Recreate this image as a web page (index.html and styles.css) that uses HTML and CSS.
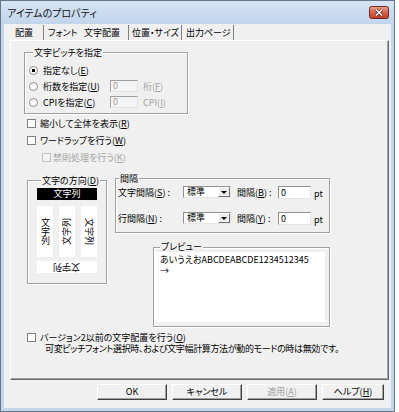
FILE: index.html
```html
<!DOCTYPE html>
<html lang="ja">
<head>
  <meta charset="UTF-8" />
  <title>アイテムのプロパティ</title>
  <link rel="stylesheet" href="styles.css">
</head>
<body>
  <div class="window">
    <div class="titlebar">
      <span class="title">アイテムのプロパティ</span>
      <span class="close">
        <svg width="20" height="13" viewBox="0 0 20 13">
          <defs>
            <linearGradient id="red" x1="0" y1="0" x2="0" y2="1">
              <stop offset="0" stop-color="#eaa596"/>
              <stop offset="0.5" stop-color="#d4624c"/>
              <stop offset="1" stop-color="#c03a28"/>
            </linearGradient>
          </defs>
          <rect x="0.5" y="0.5" width="19" height="12" rx="2" fill="url(#red)" stroke="#70291e"/>
          <path d="M7 3.5l6 6M13 3.5l-6 6" stroke="#5a2018" stroke-width="3"/>
          <path d="M7 3.5l6 6M13 3.5l-6 6" stroke="#fff" stroke-width="1.6"/>
        </svg>
      </span>
    </div>

    <div class="client">
      <div class="tabs">
        <span class="tab t1">配置</span>
        <span class="tab t2">フォント</span>
        <span class="tab t3 active">文字配置</span>
        <span class="tab t4">位置・サイズ</span>
        <span class="tab t5">出力ページ</span>
      </div>

      <div class="panel">
        <fieldset class="group pitch">
          <legend>文字ピッチを指定</legend>
          <div class="opt first"><span class="radio on"></span><span>指定なし(<u>E</u>)</span></div>
          <div class="opt">
            <span class="radio"></span><span class="opt-label">桁数を指定(<u>U</u>)</span>
            <span class="field dis">0</span><span class="muted">桁(<u>F</u>)</span>
          </div>
          <div class="opt">
            <span class="radio"></span><span class="opt-label">CPIを指定(<u>C</u>)</span>
            <span class="field dis">0</span><span class="muted">CPI(<u>I</u>)</span>
          </div>
        </fieldset>

        <div class="check first"><span class="box"></span>縮小して全体を表示(<u>R</u>)</div>
        <div class="check"><span class="box"></span>ワードラップを行う(<u>W</u>)</div>
        <div class="check sub muted"><span class="box off"></span>禁則処理を行う(<u>K</u>)</div>

        <div class="middle">
          <fieldset class="group direction">
            <legend>文字の方向(<u>D</u>)</legend>
            <div class="dir-h selected">文字列</div>
            <div class="dir-v">
              <div class="vbox"><span class="upright">文字列</span></div>
              <div class="vbox"><span class="sideways flip">文字列</span></div>
              <div class="vbox"><span class="sideways">文字列</span></div>
            </div>
            <div class="dir-h bottom"><span class="flip">文字列</span></div>
          </fieldset>

          <div class="right-col">
            <fieldset class="group spacing">
              <legend>間隔</legend>
              <div class="srow first">
                <span class="slabel">文字間隔(<u>S</u>) :</span>
                <span class="select"><span class="val">標準</span><span class="drop"><i></i></span></span>
                <span class="slabel2">間隔(<u>B</u>) :</span>
                <span class="input">0</span><span class="pt">pt</span>
              </div>
              <div class="srow">
                <span class="slabel">行間隔(<u>N</u>) :</span>
                <span class="select"><span class="val">標準</span><span class="drop"><i></i></span></span>
                <span class="slabel2">間隔(<u>Y</u>) :</span>
                <span class="input">0</span><span class="pt">pt</span>
              </div>
            </fieldset>

            <fieldset class="group preview">
              <legend>プレビュー</legend>
              <div class="preview-area">
                <div>あいうえおABCDEABCDE1234512345</div>
                <div>→</div>
              </div>
            </fieldset>
          </div>
        </div>

        <div class="check version"><span class="box"></span>バージョン2以前の文字配置を行う(<u>O</u>)</div>
        <div class="note">可変ピッチフォント選択時、および文字幅計算方法が動的モードの時は無効です。</div>
      </div>

      <div class="buttons">
        <span class="btn">OK</span>
        <span class="btn">キャンセル</span>
        <span class="btn muted">適用(<u>A</u>)</span>
        <span class="btn help">ヘルプ(<u>H</u>)</span>
      </div>
    </div>
  </div>
</body>
</html>
```

FILE: styles.css
```css
body {
  margin: 0;
  background: #fff;
  font-family: "Noto Sans CJK JP", sans-serif;
  font-size: 9px;
  line-height: 11px;
  color: #000;
  font-feature-settings: "palt";
}

.window {
  box-sizing: border-box;
  width: 395px;
  height: 412px;
  border: 1px solid #65768b;
  background: #c4d6ec;
  display: flex;
  flex-direction: column;
}

.titlebar {
  height: 23px;
  flex: none;
  display: flex;
  align-items: center;
  justify-content: space-between;
  padding: 0 5px 0 6px;
  background: linear-gradient(#d6e4f5, #c2d5ec);
}

.title {
  font-size: 10px;
  color: #111;
}

.close svg {
  display: block;
}

.client {
  flex: 1;
  margin: 0 3px 3px 3px;
  padding: 1px 1px 0 6px;
  background: #f0f0f0;
}

/* tabs */
.tabs {
  display: flex;
  height: 15px;
  line-height: 15px;
}

.tab {
  box-sizing: border-box;
  white-space: nowrap;
  border-right: 1px solid #808080;
}

.t1 { width: 34px; padding-left: 5px; }
.t2 { width: 38px; padding-left: 4px; border-right: none; }
.t3 { width: 47px; padding-left: 2px; }
.t4 { width: 53px; padding-left: 3px; }
.t5 { width: 52px; padding-left: 4px; }

.panel {
  box-sizing: border-box;
  width: 379px;
  height: 340px;
  border: 1px solid;
  border-color: #fff #696969 #696969 #fff;
  box-shadow: inset -1px -1px 0 #a0a0a0;
}

/* group boxes */
.group {
  box-sizing: border-box;
  margin: 0;
  padding: 0;
  min-width: 0;
  border: 1px solid #a0a0a0;
  box-shadow: 1px 1px 0 #fff, inset 1px 1px 0 #fff;
}

.group legend {
  padding: 0 1px;
  margin-left: 4px;
  line-height: 11px;
  white-space: nowrap;
  background: #f0f0f0;
}

.pitch {
  margin: 6px 0 0 13px;
  width: 164px;
  padding: 0 0 3px 4px;
}

.opt {
  display: flex;
  align-items: center;
  height: 16px;
  white-space: nowrap;
}

.opt.first {
  margin-top: 4px;
}

.radio {
  flex: none;
  box-sizing: border-box;
  width: 9px;
  height: 9px;
  border-radius: 50%;
  border: 1px solid #8a8a8a;
  background: #fff;
  margin-right: 5px;
}

.radio.on {
  background: radial-gradient(circle, #000 0 1.5px, #fff 2px);
}

.opt-label {
  width: 67px;
}

.field {
  box-sizing: border-box;
  width: 28px;
  height: 12px;
  line-height: 10px;
  padding-left: 2px;
  border: 1px solid;
  border-color: #a0a0a0 #e3e3e3 #e3e3e3 #a0a0a0;
  background: #f4f4f4;
  margin-right: 5px;
}

.muted,
.dis {
  color: #a3a3a3;
}

/* checkboxes */
.check {
  display: flex;
  align-items: center;
  height: 17px;
  margin-left: 16px;
  white-space: nowrap;
}

.check.first {
  margin-top: 1px;
}

.check.sub {
  margin-left: 31px;
}

.box {
  flex: none;
  box-sizing: border-box;
  width: 9px;
  height: 9px;
  border: 1px solid #808080;
  background: #fff;
  margin-right: 4px;
}

.box.off {
  border-color: #c0c0c0;
  background: #f4f4f4;
  margin-right: 2px;
}

/* middle row */
.middle {
  display: flex;
  align-items: flex-start;
  margin-top: 7px;
}

.direction {
  flex: none;
  margin: 2px 0 0 16px;
  width: 80px;
  padding: 0 8px 10px 9px;
}

.direction legend {
  margin-right: -20px;
}

.dir-h {
  width: 60px;
  height: 12px;
  line-height: 12px;
  text-align: center;
  white-space: nowrap;
  background: #fff;
}

.dir-h.selected {
  margin-top: 2px;
  background: #000;
  color: #fff;
}

.dir-h.bottom {
  margin-top: 4px;
}

.dir-v {
  display: flex;
  gap: 6px;
  margin-top: 6px;
}

.vbox {
  width: 16px;
  height: 51px;
  background: #fff;
  display: flex;
  align-items: center;
  justify-content: center;
}

.upright,
.sideways {
  flex: none;
  writing-mode: vertical-rl;
  white-space: nowrap;
  line-height: 10px;
}

.upright {
  text-orientation: upright;
}

.sideways {
  text-orientation: sideways;
}

.flip {
  display: inline-block;
  transform: rotate(180deg);
}

.right-col {
  margin-left: 8px;
}

.spacing {
  width: 215px;
  padding: 0 0 7px 2px;
}

.spacing legend {
  margin-left: 1px;
}

.srow {
  display: flex;
  align-items: center;
  height: 14px;
  margin-top: 12px;
  white-space: nowrap;
}

.srow.first {
  margin-top: 1px;
}

.slabel {
  width: 65px;
}

.slabel2 {
  width: 41px;
}

.select {
  box-sizing: border-box;
  width: 48px;
  height: 12px;
  display: flex;
  border: 1px solid;
  border-color: #909090 #e6e6e6 #e6e6e6 #909090;
  background: #fff;
  margin-right: 6px;
}

.select .val {
  flex: 1;
  padding-left: 3px;
  line-height: 10px;
}

.drop {
  box-sizing: border-box;
  width: 12px;
  display: flex;
  align-items: center;
  justify-content: center;
  background: #ececec;
  border: 1px solid;
  border-color: #fff #707070 #707070 #fff;
}

.drop i {
  width: 0;
  height: 0;
  border-left: 3px solid transparent;
  border-right: 3px solid transparent;
  border-top: 3px solid #000;
}

.input {
  box-sizing: border-box;
  width: 33px;
  height: 13px;
  line-height: 11px;
  padding-left: 2px;
  border: 1px solid;
  border-color: #909090 #e6e6e6 #e6e6e6 #909090;
  background: #fff;
  margin-right: 3px;
}

.pt {
  padding-top: 3px;
}

.preview {
  margin: 9px 0 0 38px;
  width: 177px;
  padding: 0 4px 4px 1px;
}

.preview legend {
  margin-left: 5px;
  line-height: 10px;
}

.preview-area {
  box-sizing: border-box;
  height: 70px;
  padding: 2px 5px 0;
  line-height: 11px;
  background: #fff;
  white-space: nowrap;
}

.check.version {
  margin-top: 5px;
  height: 11px;
}

.note {
  margin-left: 34px;
  letter-spacing: -0.35px;
  white-space: nowrap;
}

/* dialog buttons */
.buttons {
  display: flex;
  gap: 5px;
  margin: 4px 0 0 87px;
}

.btn {
  box-sizing: border-box;
  width: 70px;
  height: 16px;
  line-height: 14px;
  text-align: center;
  background: #f0f0f0;
  border: 1px solid;
  border-color: #fff #404040 #404040 #fff;
  box-shadow: inset -1px -1px 0 #a0a0a0;
}

.btn.help {
  width: 62px;
}
```
